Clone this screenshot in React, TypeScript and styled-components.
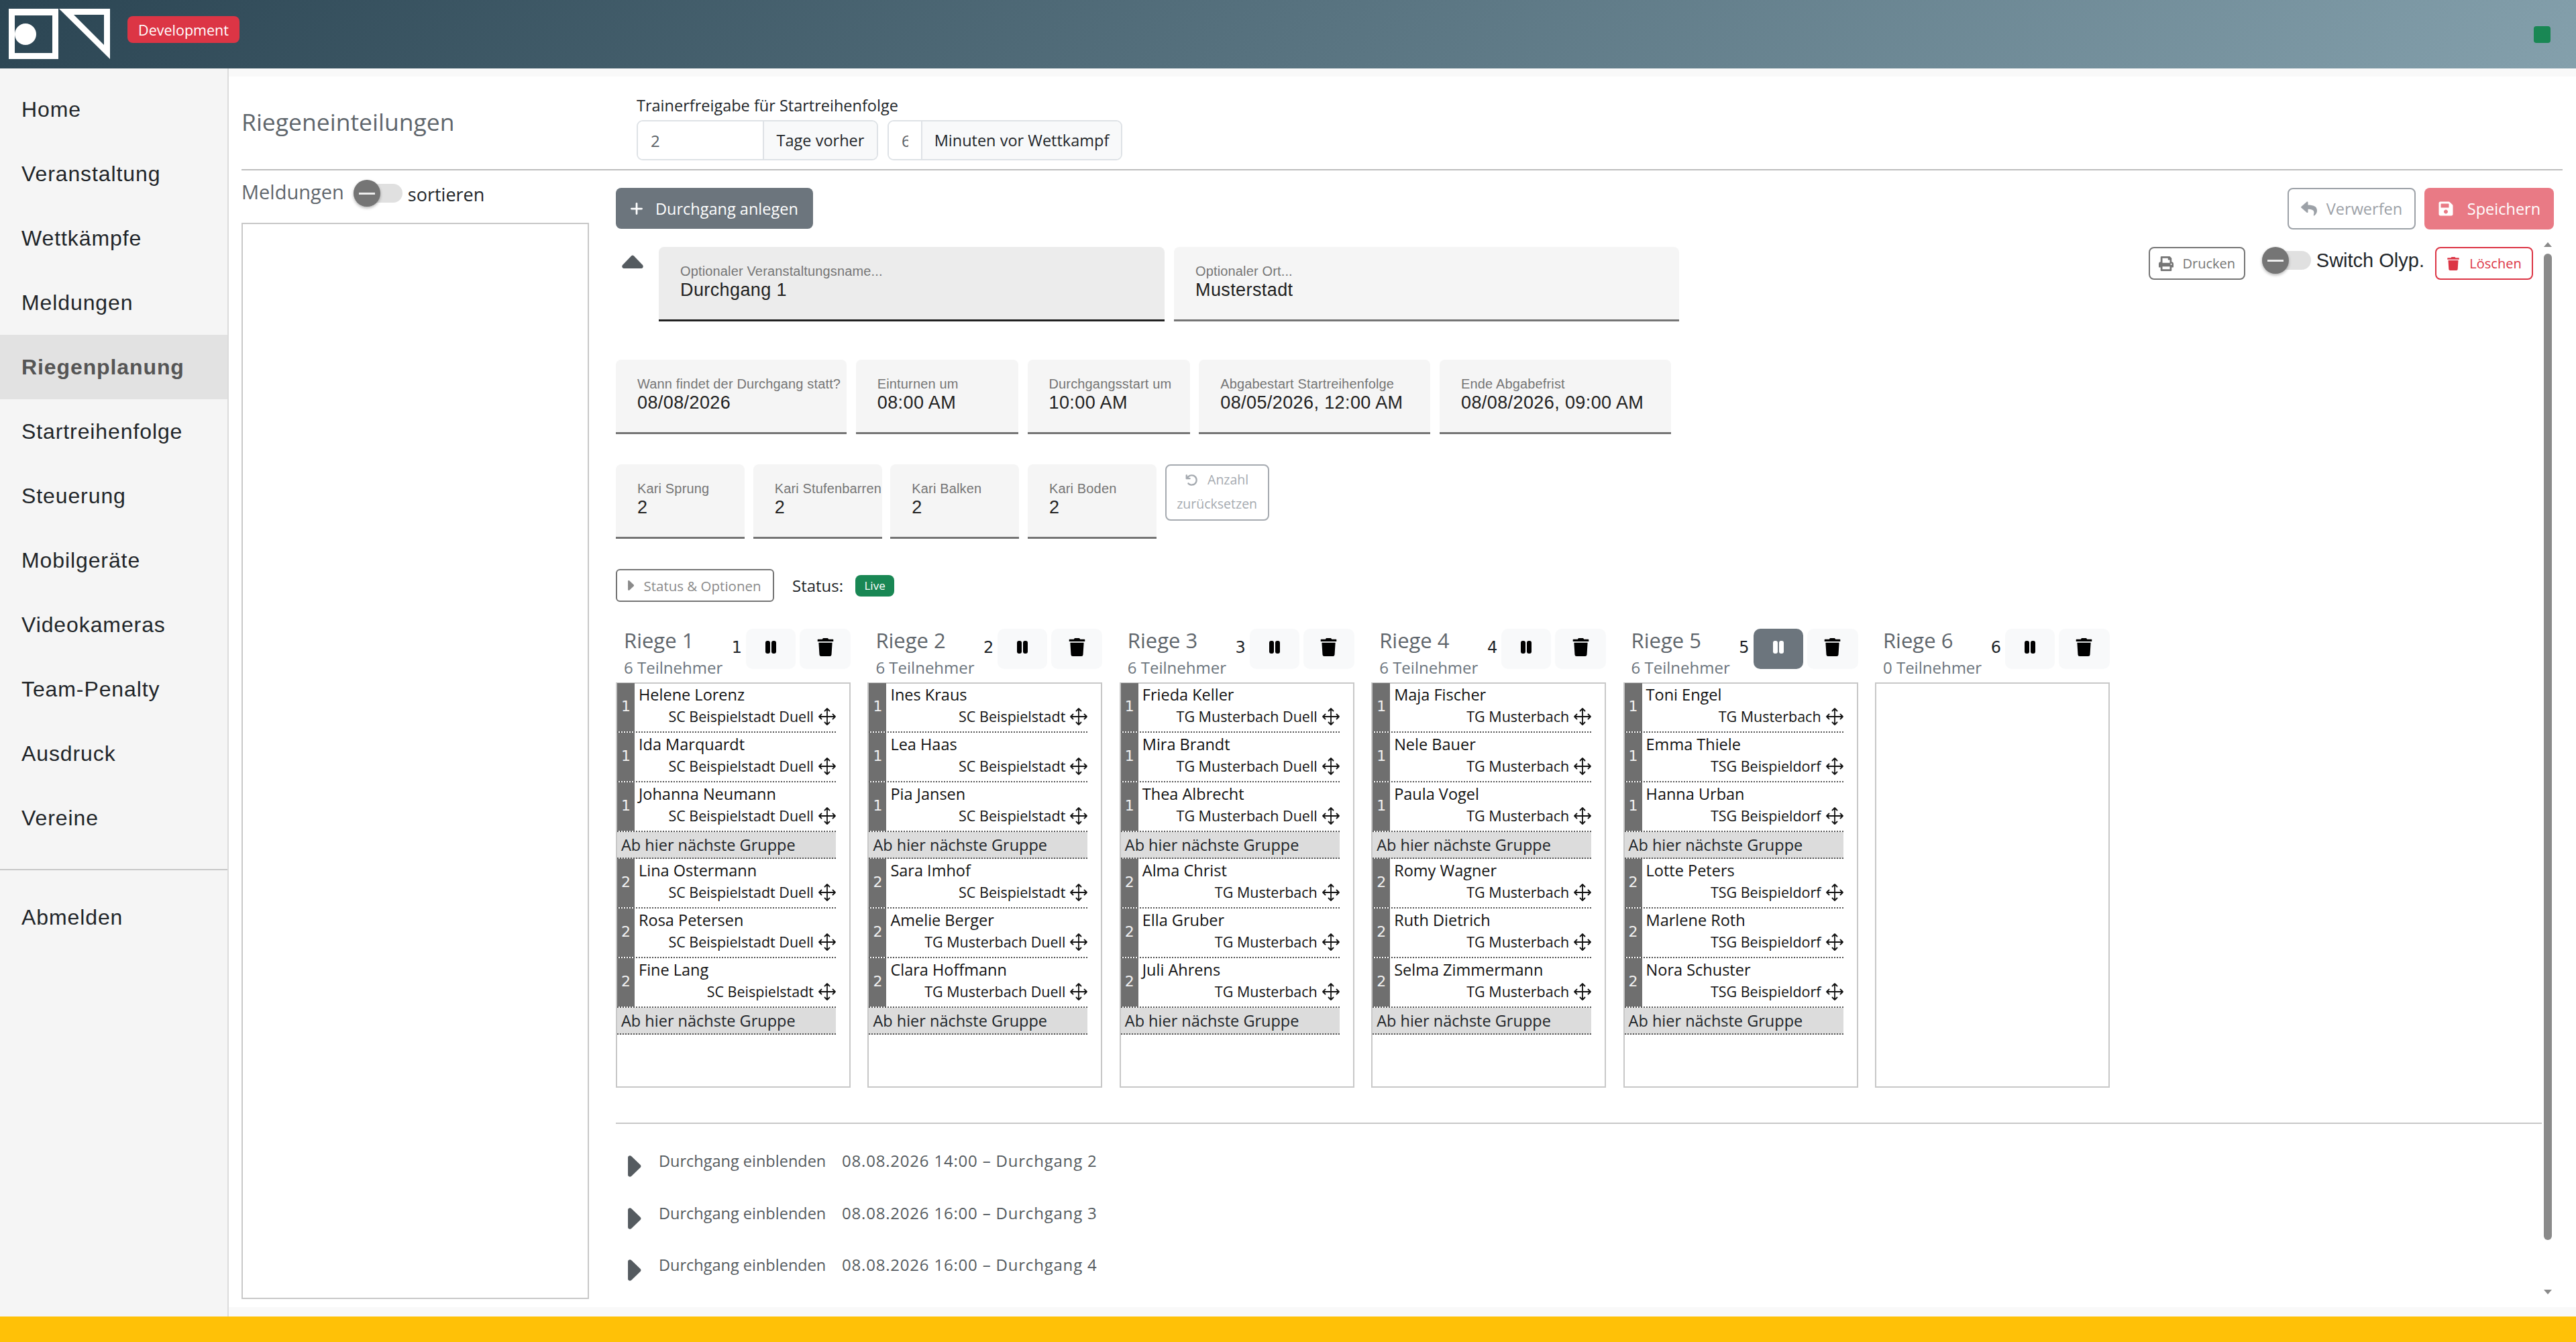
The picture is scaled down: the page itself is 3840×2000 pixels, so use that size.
import { createGlobalStyle, styled } from "styled-components";
import { BsPlusLg } from "react-icons/bs";
import { FaPrint, FaReply, FaSave, FaTrash } from "react-icons/fa";
import { FaArrowRotateLeft } from "react-icons/fa6";

const MUI_FONT = `"Liberation Sans", Arial, sans-serif`;

const GlobalStyle = createGlobalStyle`
  html, body { margin: 0; padding: 0; height: 100%; background: #fff; }
  body { font-family: "Open Sans", "Liberation Sans", sans-serif; color: #212529; }
  * { box-sizing: border-box; }
`;

const Page = styled.div`
  height: 2000px;
  display: flex;
  flex-direction: column;
  overflow: hidden;
`;

const Header = styled.header`
  flex: 0 0 102px;
  display: flex;
  align-items: center;
  padding: 0 38px 0 13px;
  background: linear-gradient(135deg, #2b4553 0%, #84a0ac 100%);
`;

const Badge = styled.span`
  margin-left: 25px;
  height: 40px;
  width: 167px;
  margin-top: -14px;
  background: #dc3545;
  color: #fff;
  border-radius: 8px;
  font-size: 21.5px;
  display: flex;
  align-items: center;
  justify-content: center;
  white-space: nowrap;
`;

const OnlineDot = styled.span`
  margin-left: auto;
  width: 25px;
  height: 25px;
  margin-top: 1px;
  background: #198754;
  border-radius: 4px;
`;

const Middle = styled.div`
  flex: 1;
  display: flex;
  min-height: 0;
`;

const Sidebar = styled.nav`
  flex: 0 0 341px;
  background: #f5f5f5;
  border-right: 2px solid #dcdcdc;
  padding-top: 13px;
  font-family: ${MUI_FONT};
`;

const NavItem = styled.div<{ $active?: boolean }>`
  height: 96px;
  padding-left: 32px;
  display: flex;
  align-items: center;
  font-size: 32px;
  letter-spacing: 0.9px;
  color: ${(p) => (p.$active ? "#555" : "#212529")};
  font-weight: ${(p) => (p.$active ? 700 : 400)};
  background: ${(p) => (p.$active ? "#e2e2e2" : "transparent")};
`;

const NavDivider = styled.div`
  height: 2px;
  background: #c8c8c8;
  margin: 28px 0 22px;
`;

const Main = styled.main`
  flex: 1;
  min-width: 0;
  background: #f9f9f9;
  padding: 12px 0 14px;
  display: flex;
`;

const Panel = styled.div`
  flex: 1;
  min-width: 0;
  background: #fff;
  padding: 0 20px 12px 19px;
  display: flex;
  flex-direction: column;
`;

const TopRow = styled.div`
  flex: 0 0 138px;
  display: flex;
`;

const PageTitle = styled.h3`
  flex: 0 0 589px;
  margin: 0;
  padding-top: 44px;
  font-size: 35.5px;
  line-height: 46px;
  font-weight: 400;
  color: #5f666c;
`;

const ReleaseBlock = styled.div`
  padding-top: 28px;
`;

const ReleaseLabel = styled.div`
  font-size: 23.5px;
  line-height: 30px;
  margin-bottom: 7px;
  color: #212529;
`;

const GroupRow = styled.div`
  display: flex;
  gap: 14px;
`;

const InputGroup = styled.div`
  height: 60px;
  display: flex;
  border: 2px solid #dee2e6;
  border-radius: 9px;
  overflow: hidden;
`;

const GroupInput = styled.input<{ $w: number }>`
  width: ${(p) => p.$w}px;
  border: 0;
  outline: 0;
  padding: 0 19px;
  font: inherit;
  font-size: 24px;
  color: #5a6167;
  background: #fff;
`;

const GroupAddon = styled.span<{ $w: number }>`
  width: ${(p) => p.$w}px;
  display: flex;
  align-items: center;
  justify-content: center;
  background: #f8f9fa;
  border-left: 2px solid #dee2e6;
  font-size: 23.5px;
  color: #212529;
  white-space: nowrap;
`;

const Rule = styled.hr`
  flex: 0 0 2px;
  width: 100%;
  height: 2px;
  margin: 0;
  border: 0;
  background: #bdbdbd;
`;

const Body = styled.div`
  flex: 1;
  min-height: 0;
  display: flex;
  gap: 40px;
`;

const LeftColumn = styled.div`
  flex: 0 0 518px;
  display: flex;
  flex-direction: column;
`;

const LeftHead = styled.div`
  flex: 0 0 78px;
  display: flex;
  align-items: center;
  padding-bottom: 10px;
`;

const LeftTitle = styled.span`
  font-size: 29px;
  color: #5f666c;
  margin-right: 14px;
  margin-top: -6px;
`;

const SortLabel = styled.span`
  font-size: 27px;
  margin-left: 8px;
  margin-top: 2px;
  color: #212529;
`;

const EntryBox = styled.div`
  flex: 1;
  border: 2px solid #c8c8c8;
`;

const RightColumn = styled.div`
  flex: 1;
  min-width: 0;
  display: flex;
  flex-direction: column;
`;

const ToolBar = styled.div`
  display: flex;
  justify-content: space-between;
  align-items: flex-start;
  padding: 26px 13px 0 0;
`;

const SaveGroup = styled.div`
  display: flex;
  gap: 13px;
`;

const AddRunButton = styled.div`
  width: 294px;
  height: 61px;
  display: flex;
  align-items: center;
  padding-left: 20px;
  gap: 17px;
  background: #6c757d;
  color: #fff;
  border-radius: 8px;
  font-size: 23.5px;
  white-space: nowrap;
  svg {
    stroke: currentColor;
    stroke-width: 1px;
  }
`;

const OutlineButton = styled.div<{ $color: string; $w: number; $h: number; $size?: number }>`
  flex: 0 0 auto;
  width: ${(p) => p.$w}px;
  height: ${(p) => p.$h}px;
  display: flex;
  align-items: center;
  justify-content: center;
  gap: 14px;
  border: 2px solid ${(p) => p.$color};
  border-radius: 8px;
  color: ${(p) => p.$color};
  font-size: ${(p) => p.$size ?? 24}px;
  background: #fff;
  white-space: nowrap;
`;

const SolidButton = styled.div<{ $bg: string; $w: number }>`
  width: ${(p) => p.$w}px;
  height: 62px;
  display: flex;
  align-items: center;
  justify-content: center;
  gap: 20px;
  background: ${(p) => p.$bg};
  color: #fff;
  border-radius: 8px;
  font-size: 23.5px;
  white-space: nowrap;
`;

const ScrollArea = styled.div`
  flex: 1;
  min-height: 0;
  display: flex;
  margin-top: 16px;
`;

const ScrollContent = styled.div`
  flex: 1;
  min-width: 0;
  padding: 10px 16px 0 0;
`;

const ScrollTrack = styled.div`
  flex: 0 0 12px;
  margin-right: 16px;
  display: flex;
  flex-direction: column;
  align-items: center;
  padding-top: 3px;
`;

const ScrollArrow = styled.span<{ $down?: boolean }>`
  width: 0;
  height: 0;
  border-left: 6px solid transparent;
  border-right: 6px solid transparent;
  ${(p) =>
    p.$down ? "border-top: 7px solid #8a8a8a;" : "border-bottom: 7px solid #8a8a8a;"}
`;

const ScrollThumb = styled.div`
  flex: 0 0 1470px;
  width: 12px;
  margin: 10px 0 74px;
  background: #8a8a8a;
  border-radius: 6px;
`;

const RunHead = styled.div`
  display: flex;
  height: 111px;
`;

const CaretCell = styled.div`
  flex: 0 0 64px;
  padding: 12px 0 0 9px;
  color: #555b60;
`;

const FieldBox = styled.div<{ $w: number; $active?: boolean }>`
  flex: 0 0 ${(p) => p.$w}px;
  width: ${(p) => p.$w}px;
  height: 111px;
  padding: 24px 0 0 32px;
  font-family: ${MUI_FONT};
  background: ${(p) => (p.$active ? "#ececec" : "#f5f5f5")};
  border-bottom: 3px solid ${(p) => (p.$active ? "#212121" : "#757575")};
  border-radius: 8px 8px 0 0;
  overflow: hidden;
`;

const FieldLabel = styled.div`
  font-size: 20px;
  line-height: 24px;
  color: #757575;
  letter-spacing: 0.15px;
  white-space: nowrap;
`;

const FieldValue = styled.div`
  font-size: 27px;
  line-height: 32px;
  letter-spacing: 0.4px;
  color: #212121;
  white-space: nowrap;
`;

const HeadFields = styled.div`
  display: flex;
  gap: 14px;
`;

const HeadActions = styled.div`
  margin-left: auto;
  display: flex;
  align-items: flex-start;
`;

const SwitchWrap = styled.div<{ $left?: number; $right?: number }>`
  margin: 0 ${(p) => p.$right ?? 0}px 0 ${(p) => p.$left ?? 0}px;
  width: 73px;
  height: 40px;
  display: flex;
  align-items: center;
  position: relative;
`;

const SwitchTrack = styled.span`
  width: 100%;
  height: 28px;
  background: #e0e0e0;
  border-radius: 14px;
`;

const SwitchKnob = styled.span`
  position: absolute;
  left: 0;
  top: 0;
  width: 40px;
  height: 40px;
  border-radius: 50%;
  background: #757575;
  box-shadow: 0 2px 4px rgba(0, 0, 0, 0.3);
  display: flex;
  align-items: center;
  justify-content: center;
  &::after {
    content: "";
    width: 24px;
    height: 3px;
    background: #eee;
  }
`;

const SwitchText = styled.span`
  font-family: ${MUI_FONT};
  font-size: 29px;
  line-height: 40px;
  margin-right: 16px;
  color: #212529;
  white-space: nowrap;
`;

const FieldRow = styled.div<{ $top: number; $gap: number }>`
  display: flex;
  gap: ${(p) => p.$gap}px;
  margin-top: ${(p) => p.$top}px;
`;

const ResetButton = styled.div`
  flex: 0 0 155px;
  height: 84px;
  border: 2px solid #a5aab0;
  border-radius: 8px;
  color: #a5aab0;
  font-size: 19.5px;
  line-height: 36px;
  text-align: center;
  padding-top: 3px;
  svg {
    margin-right: 14px;
    vertical-align: -3px;
  }
`;

const StatusRow = styled.div`
  display: flex;
  align-items: center;
  margin-top: 45px;
`;

const StatusButton = styled.div`
  width: 236px;
  height: 49px;
  border: 2px solid #757575;
  border-radius: 6px;
  display: flex;
  align-items: center;
  padding-left: 16px;
  gap: 14px;
  color: #8a8a8a;
  font-size: 20.5px;
  white-space: nowrap;
`;

const StatusLabel = styled.span`
  margin-left: 27px;
  font-size: 24px;
  color: #212529;
`;

const LiveBadge = styled.span`
  margin-left: 18px;
  width: 58px;
  height: 32px;
  background: #198754;
  color: #fff;
  border-radius: 8px;
  font-size: 17px;
  display: flex;
  align-items: center;
  justify-content: center;
`;

const Columns = styled.div`
  display: flex;
  gap: 25.4px;
  margin-top: 39px;
`;

const Column = styled.div`
  flex: 0 0 350px;
  width: 350px;
`;

const ColumnHead = styled.div`
  height: 81px;
  display: flex;
  align-items: flex-start;
`;

const ColumnTitles = styled.div`
  flex: 1;
  padding-left: 12px;
`;

const ColumnTitle = styled.div`
  font-size: 31px;
  line-height: 36px;
  color: #5f666c;
`;

const ColumnCount = styled.div`
  font-size: 24px;
  line-height: 30px;
  margin-top: 8px;
  color: #6c757d;
`;

const ColumnNumber = styled.span`
  font-family: "DejaVu Sans", sans-serif;
  font-size: 24px;
  line-height: 30px;
  margin: 14px 6px 0 0;
  color: #212529;
`;

const IconButton = styled.div<{ $active?: boolean; $w: number }>`
  width: ${(p) => p.$w}px;
  height: 60px;
  margin-top: 1px;
  border-radius: 10px;
  display: flex;
  align-items: center;
  justify-content: center;
  padding-bottom: 6px;
  background: ${(p) => (p.$active ? "#6c757d" : "#f8f9fa")};
  color: ${(p) => (p.$active ? "#fff" : "#000")};
  & + & {
    margin-left: 6px;
  }
`;

const SquadBox = styled.div`
  height: 604px;
  border: 2px solid #c8c8c8;
  padding-right: 20px;
  > :first-child {
    margin-top: -1px;
  }
`;

const Gymnast = styled.div`
  height: 74px;
  display: flex;
  border-bottom: 2px dotted #555;
`;

const RankStrip = styled.div`
  flex: 0 0 26px;
  background: #6f6f6f;
  color: #f2f2f2;
  font-family: "DejaVu Sans", sans-serif;
  font-size: 22px;
  display: flex;
  align-items: center;
  justify-content: center;
  padding-bottom: 4px;
`;

const GymnastInfo = styled.div`
  flex: 1;
  min-width: 0;
  padding-left: 6px;
`;

const GymnastName = styled.div`
  font-size: 23.5px;
  line-height: 34px;
  color: #111;
  white-space: nowrap;
`;

const GymnastClub = styled.div`
  display: flex;
  align-items: center;
  justify-content: flex-end;
  gap: 7px;
  margin-top: 2px;
  font-size: 21.5px;
  line-height: 28px;
  color: #111;
  white-space: nowrap;
`;

const GroupSplit = styled.div`
  height: 40px;
  display: flex;
  align-items: center;
  padding: 0 0 1px 6px;
  background: #dcdcdc;
  border-bottom: 2px dotted #555;
  font-size: 23.5px;
  color: #212529;
  white-space: nowrap;
`;

const LowerRule = styled.hr`
  height: 2px;
  margin: 52px -13px 15px 0;
  border: 0;
  background: #c8c8c8;
`;

const HiddenRun = styled.div`
  height: 77.5px;
  display: flex;
  align-items: flex-start;
  padding-top: 26px;
  color: #555b60;
`;

const HiddenCaret = styled.span`
  flex: 0 0 64px;
  padding: 6px 0 0 18px;
`;

const HiddenHint = styled.span`
  flex: 0 0 273px;
  font-size: 23.5px;
  line-height: 28px;
  white-space: nowrap;
`;

const HiddenTitle = styled.span`
  font-size: 24px;
  line-height: 28px;
  letter-spacing: 0.8px;
  white-space: nowrap;
`;

const Footer = styled.footer`
  flex: 0 0 38px;
  background: #ffc107;
`;

function Logo() {
  return (
    <svg width="152" height="76" viewBox="0 0 152 76">
      <path
        fill="#fff"
        fillRule="evenodd"
        d="M0 0H74V75H0ZM9 10V66H65V10ZM25 22a16 16 0 1 1 0 32a16 16 0 1 1 0-32Z"
      />
      <path fill="#fff" fillRule="evenodd" d="M75 0H151V75ZM97 9L142 54V9Z" />
    </svg>
  );
}

function Toggle({ left, right }: { left?: number; right?: number }) {
  return (
    <SwitchWrap $left={left} $right={right}>
      <SwitchTrack />
      <SwitchKnob />
    </SwitchWrap>
  );
}

function CaretUp() {
  return (
    <svg width="32" height="20" viewBox="0 0 32 20" fill="currentColor">
      <path d="M14 1.500a3 3 0 0 1 4 0L31 15c1.600 1.800.6 5-2 5H3c-2.600 0-3.600-3.200-2-5Z" />
    </svg>
  );
}

function CaretRight({ size }: { size: number }) {
  return (
    <svg width={size * 0.63} height={size} viewBox="0 0 20 32" fill="currentColor">
      <path
        d="M1.500 18a3 3 0 0 1 0-4L15 1c1.800-1.600 5-.6 5 2v26c0 2.600-3.200 3.600-5 2Z"
        transform="rotate(180 10 16)"
      />
    </svg>
  );
}

function PauseIcon() {
  return (
    <svg width="16" height="19" viewBox="0 0 16 19" fill="currentColor">
      <rect x="0" y="0" width="7" height="19" rx="3" />
      <rect x="9" y="0" width="7" height="19" rx="3" />
    </svg>
  );
}

function MoveIcon() {
  return (
    <svg
      width="26"
      height="26"
      viewBox="0 0 26 26"
      fill="none"
      stroke="currentColor"
      strokeWidth="1.800"
      strokeLinecap="round"
      strokeLinejoin="round"
    >
      <path d="M13 1V25M1 13H25M9.500 4.500L13 1l3.500 3.500M9.500 21.500L13 25l3.500-3.500M4.500 9.500L1 13l3.500 3.500M21.500 9.500L25 13l-3.500 3.500" />
    </svg>
  );
}

const navItems = [
  "Home",
  "Veranstaltung",
  "Wettkämpfe",
  "Meldungen",
  "Riegenplanung",
  "Startreihenfolge",
  "Steuerung",
  "Mobilgeräte",
  "Videokameras",
  "Team-Penalty",
  "Ausdruck",
  "Vereine",
];

type Member = [string, string];

const SB = "SC Beispielstadt";
const SBD = "SC Beispielstadt Duell";
const TM = "TG Musterbach";
const TMD = "TG Musterbach Duell";
const TSG = "TSG Beispieldorf";

const squads: Member[][] = [
  [
    ["Helene Lorenz", SBD],
    ["Ida Marquardt", SBD],
    ["Johanna Neumann", SBD],
    ["Lina Ostermann", SBD],
    ["Rosa Petersen", SBD],
    ["Fine Lang", SB],
  ],
  [
    ["Ines Kraus", SB],
    ["Lea Haas", SB],
    ["Pia Jansen", SB],
    ["Sara Imhof", SB],
    ["Amelie Berger", TMD],
    ["Clara Hoffmann", TMD],
  ],
  [
    ["Frieda Keller", TMD],
    ["Mira Brandt", TMD],
    ["Thea Albrecht", TMD],
    ["Alma Christ", TM],
    ["Ella Gruber", TM],
    ["Juli Ahrens", TM],
  ],
  [
    ["Maja Fischer", TM],
    ["Nele Bauer", TM],
    ["Paula Vogel", TM],
    ["Romy Wagner", TM],
    ["Ruth Dietrich", TM],
    ["Selma Zimmermann", TM],
  ],
  [
    ["Toni Engel", TM],
    ["Emma Thiele", TSG],
    ["Hanna Urban", TSG],
    ["Lotte Peters", TSG],
    ["Marlene Roth", TSG],
    ["Nora Schuster", TSG],
  ],
  [],
];

const timeFields = [
  { label: "Wann findet der Durchgang statt?", value: "08/08/2026", w: 344 },
  { label: "Einturnen um", value: "08:00 AM", w: 242 },
  { label: "Durchgangsstart um", value: "10:00 AM", w: 242 },
  { label: "Abgabestart Startreihenfolge", value: "08/05/2026, 12:00 AM", w: 345 },
  { label: "Ende Abgabefrist", value: "08/08/2026, 09:00 AM", w: 345 },
];

const kariFields = ["Kari Sprung", "Kari Stufenbarren", "Kari Balken", "Kari Boden"];

const hiddenRuns = [
  "08.08.2026 14:00 – Durchgang 2",
  "08.08.2026 16:00 – Durchgang 3",
  "08.08.2026 16:00 – Durchgang 4",
];

function MemberRow({ member, rank }: { member: Member; rank: number }) {
  return (
    <Gymnast>
      <RankStrip>{rank}</RankStrip>
      <GymnastInfo>
        <GymnastName>{member[0]}</GymnastName>
        <GymnastClub>
          {member[1]}
          <MoveIcon />
        </GymnastClub>
      </GymnastInfo>
    </Gymnast>
  );
}

function Squad({ members, index }: { members: Member[]; index: number }) {
  return (
    <Column>
      <ColumnHead>
        <ColumnTitles>
          <ColumnTitle>Riege {index + 1}</ColumnTitle>
          <ColumnCount>{members.length} Teilnehmer</ColumnCount>
        </ColumnTitles>
        <ColumnNumber>{index + 1}</ColumnNumber>
        <IconButton $w={74} $active={index === 4}>
          <PauseIcon />
        </IconButton>
        <IconButton $w={76}>
          <FaTrash size={27} />
        </IconButton>
      </ColumnHead>
      <SquadBox>
        {members.length > 0 && (
          <>
            {members.slice(0, 3).map((m) => (
              <MemberRow key={m[0]} member={m} rank={1} />
            ))}
            <GroupSplit>Ab hier nächste Gruppe</GroupSplit>
            {members.slice(3).map((m) => (
              <MemberRow key={m[0]} member={m} rank={2} />
            ))}
            <GroupSplit>Ab hier nächste Gruppe</GroupSplit>
          </>
        )}
      </SquadBox>
    </Column>
  );
}

export default function App() {
  return (
    <Page>
      <GlobalStyle />
      <Header>
        <Logo />
        <Badge>Development</Badge>
        <OnlineDot />
      </Header>
      <Middle>
        <Sidebar>
          {navItems.map((item) => (
            <NavItem key={item} $active={item === "Riegenplanung"}>
              {item}
            </NavItem>
          ))}
          <NavDivider />
          <NavItem>Abmelden</NavItem>
        </Sidebar>
        <Main>
          <Panel>
            <TopRow>
              <PageTitle>Riegeneinteilungen</PageTitle>
              <ReleaseBlock>
                <ReleaseLabel>Trainerfreigabe für Startreihenfolge</ReleaseLabel>
                <GroupRow>
                  <InputGroup>
                    <GroupInput $w={186} readOnly value="2" />
                    <GroupAddon $w={170}>Tage vorher</GroupAddon>
                  </InputGroup>
                  <InputGroup>
                    <GroupInput $w={48} readOnly value="60" />
                    <GroupAddon $w={298}>Minuten vor Wettkampf</GroupAddon>
                  </InputGroup>
                </GroupRow>
              </ReleaseBlock>
            </TopRow>
            <Rule />
            <Body>
              <LeftColumn>
                <LeftHead>
                  <LeftTitle>Meldungen</LeftTitle>
                  <Toggle />
                  <SortLabel>sortieren</SortLabel>
                </LeftHead>
                <EntryBox />
              </LeftColumn>
              <RightColumn>
                <ToolBar>
                  <AddRunButton>
                    <BsPlusLg size={22} />
                    Durchgang anlegen
                  </AddRunButton>
                  <SaveGroup>
                    <OutlineButton $color="#9ca1a7" $w={191} $h={62} $size={23.5}>
                      <FaReply size={24} />
                      Verwerfen
                    </OutlineButton>
                    <SolidButton $bg="#e97a85" $w={193}>
                      <FaSave size={24} />
                      Speichern
                    </SolidButton>
                  </SaveGroup>
                </ToolBar>
                <ScrollArea>
                  <ScrollContent>
                    <RunHead>
                      <CaretCell>
                        <CaretUp />
                      </CaretCell>
                      <HeadFields>
                        <FieldBox $w={754} $active>
                          <FieldLabel>Optionaler Veranstaltungsname...</FieldLabel>
                          <FieldValue>Durchgang 1</FieldValue>
                        </FieldBox>
                        <FieldBox $w={753}>
                          <FieldLabel>Optionaler Ort...</FieldLabel>
                          <FieldValue>Musterstadt</FieldValue>
                        </FieldBox>
                      </HeadFields>
                      <HeadActions>
                        <OutlineButton $color="#757575" $w={144} $h={49} $size={20}>
                          <FaPrint size={22} />
                          Drucken
                        </OutlineButton>
                        <Toggle left={25} right={8} />
                        <SwitchText>Switch Olyp.</SwitchText>
                        <OutlineButton $color="#dc3545" $w={146} $h={49} $size={20}>
                          <FaTrash size={20} />
                          Löschen
                        </OutlineButton>
                      </HeadActions>
                    </RunHead>
                    <FieldRow $top={57} $gap={13.75}>
                      {timeFields.map((f) => (
                        <FieldBox key={f.label} $w={f.w}>
                          <FieldLabel>{f.label}</FieldLabel>
                          <FieldValue>{f.value}</FieldValue>
                        </FieldBox>
                      ))}
                    </FieldRow>
                    <FieldRow $top={45} $gap={12.67}>
                      {kariFields.map((label) => (
                        <FieldBox key={label} $w={192}>
                          <FieldLabel>{label}</FieldLabel>
                          <FieldValue>2</FieldValue>
                        </FieldBox>
                      ))}
                      <ResetButton>
                        <FaArrowRotateLeft size={19} />
                        Anzahl zurücksetzen
                      </ResetButton>
                    </FieldRow>
                    <StatusRow>
                      <StatusButton>
                        <CaretRight size={15} />
                        Status &amp; Optionen
                      </StatusButton>
                      <StatusLabel>Status:</StatusLabel>
                      <LiveBadge>Live</LiveBadge>
                    </StatusRow>
                    <Columns>
                      {squads.map((members, i) => (
                        <Squad key={i} members={members} index={i} />
                      ))}
                    </Columns>
                    <LowerRule />
                    {hiddenRuns.map((title) => (
                      <HiddenRun key={title}>
                        <HiddenCaret>
                          <CaretRight size={32} />
                        </HiddenCaret>
                        <HiddenHint>Durchgang einblenden</HiddenHint>
                        <HiddenTitle>{title}</HiddenTitle>
                      </HiddenRun>
                    ))}
                  </ScrollContent>
                  <ScrollTrack>
                    <ScrollArrow />
                    <ScrollThumb />
                    <ScrollArrow $down />
                  </ScrollTrack>
                </ScrollArea>
              </RightColumn>
            </Body>
          </Panel>
        </Main>
      </Middle>
      <Footer />
    </Page>
  );
}
